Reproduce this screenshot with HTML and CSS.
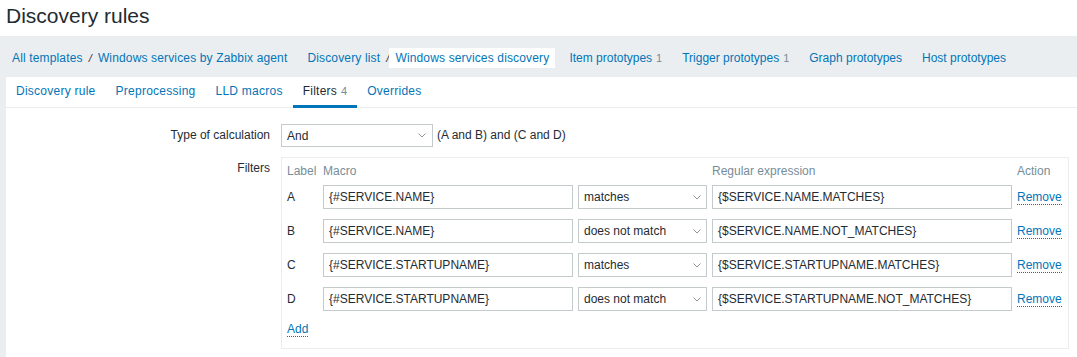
FILE: index.html
```html
<!DOCTYPE html>
<html>
<head>
<meta charset="utf-8">
<title>Discovery rules</title>
<link rel="stylesheet" href="styles.css">
</head>
<body>
<header class="page-header">
  <h1 class="page-title">Discovery rules</h1>
</header>
<main class="main">
  <nav class="breadcrumbs">
    <div class="crumb-group crumb-path">
      <a class="crumb" href="#">All templates</a><span class="sep">/</span><a class="crumb" href="#">Windows services by Zabbix agent</a>
    </div>
    <div class="crumb-group crumb-path">
      <a class="crumb" href="#">Discovery list</a><span class="sep">/</span><span class="crumb crumb-current">Windows services discovery</span>
    </div>
    <div class="crumb-group"><a class="crumb" href="#">Item prototypes<span class="count">1</span></a></div>
    <div class="crumb-group"><a class="crumb" href="#">Trigger prototypes<span class="count">1</span></a></div>
    <div class="crumb-group"><a class="crumb" href="#">Graph prototypes</a></div>
    <div class="crumb-group"><a class="crumb" href="#">Host prototypes</a></div>
  </nav>
  <section class="panel">
    <ul class="tabs">
      <li class="tab"><a href="#">Discovery rule</a></li>
      <li class="tab"><a href="#">Preprocessing</a></li>
      <li class="tab"><a href="#">LLD macros</a></li>
      <li class="tab tab-active"><a href="#">Filters<span class="count">4</span></a></li>
      <li class="tab"><a href="#">Overrides</a></li>
    </ul>
    <div class="form">
      <div class="form-row">
        <label class="form-label">Type of calculation</label>
        <div class="form-field inline">
          <div class="select calc-select"><span>And</span><svg class="chev" width="8" height="5" viewBox="0 0 8 5"><path d="M0.5 0.5 L4 4 L7.5 0.5" fill="none" stroke="#8a949a" stroke-width="1"/></svg></div>
          <span class="formula">(A and B) and (C and D)</span>
        </div>
      </div>
      <div class="form-row">
        <label class="form-label">Filters</label>
        <div class="form-field">
          <div class="filters">
            <div class="f-row f-head">
              <span>Label</span><span>Macro</span><span></span><span>Regular expression</span><span>Action</span>
            </div>
            <div class="f-row">
              <span class="f-label">A</span>
              <div class="input">{#SERVICE.NAME}</div>
              <div class="select"><span>matches</span><svg class="chev" width="8" height="5" viewBox="0 0 8 5"><path d="M0.5 0.5 L4 4 L7.5 0.5" fill="none" stroke="#8a949a" stroke-width="1"/></svg></div>
              <div class="input">{$SERVICE.NAME.MATCHES}</div>
              <a class="link" href="#">Remove</a>
            </div>
            <div class="f-row">
              <span class="f-label">B</span>
              <div class="input">{#SERVICE.NAME}</div>
              <div class="select"><span>does not match</span><svg class="chev" width="8" height="5" viewBox="0 0 8 5"><path d="M0.5 0.5 L4 4 L7.5 0.5" fill="none" stroke="#8a949a" stroke-width="1"/></svg></div>
              <div class="input">{$SERVICE.NAME.NOT_MATCHES}</div>
              <a class="link" href="#">Remove</a>
            </div>
            <div class="f-row">
              <span class="f-label">C</span>
              <div class="input">{#SERVICE.STARTUPNAME}</div>
              <div class="select"><span>matches</span><svg class="chev" width="8" height="5" viewBox="0 0 8 5"><path d="M0.5 0.5 L4 4 L7.5 0.5" fill="none" stroke="#8a949a" stroke-width="1"/></svg></div>
              <div class="input">{$SERVICE.STARTUPNAME.MATCHES}</div>
              <a class="link" href="#">Remove</a>
            </div>
            <div class="f-row">
              <span class="f-label">D</span>
              <div class="input">{#SERVICE.STARTUPNAME}</div>
              <div class="select"><span>does not match</span><svg class="chev" width="8" height="5" viewBox="0 0 8 5"><path d="M0.5 0.5 L4 4 L7.5 0.5" fill="none" stroke="#8a949a" stroke-width="1"/></svg></div>
              <div class="input">{$SERVICE.STARTUPNAME.NOT_MATCHES}</div>
              <a class="link" href="#">Remove</a>
            </div>
            <div class="f-add"><a class="link" href="#">Add</a></div>
          </div>
        </div>
      </div>
    </div>
  </section>
</main>
</body>
</html>
```

FILE: styles.css
```css
* { box-sizing: border-box; }

html, body {
  margin: 0;
  padding: 0;
}

body {
  font-family: "Liberation Sans", Arial, sans-serif;
  font-size: 12px;
  color: #1f2c33;
  background: #ebeef0;
}

a { color: #0275b8; text-decoration: none; }

.page-header {
  background: #ffffff;
  height: 36px;
  padding: 2px 6px 0;
}

.page-title {
  margin: 0;
  font-size: 21px;
  font-weight: normal;
  line-height: 28px;
  color: #1f2c33;
}

.main {
  padding: 0 0 0 6px;
}

.breadcrumbs {
  height: 41px;
  display: flex;
  align-items: center;
  gap: 8px;
  padding-top: 3px;
}

.crumb-group {
  display: flex;
  align-items: center;
}

.crumb-path {
  letter-spacing: 0.15px;
}

.crumb {
  display: block;
  padding: 0 6px;
  line-height: 20px;
}

.crumb-current {
  background: #ffffff;
  color: #0275b8;
}

.sep {
  color: #1f2c33;
  font-size: 11px;
  font-style: italic;
}

.count {
  color: #768d99;
  font-size: 11px;
  margin-left: 4px;
  letter-spacing: 0;
}

.panel {
  background: #ffffff;
  min-height: 280px;
}

.tabs {
  list-style: none;
  margin: 0;
  padding: 0;
  display: flex;
  height: 31px;
  border-bottom: 1px solid #ebeef0;
}

.tab a {
  display: block;
  padding: 0 10px;
  line-height: 29px;
  height: 31px;
  border-bottom: 3px solid transparent;
  letter-spacing: 0.25px;
}

.tab-active a {
  color: #1f2c33;
  border-bottom-color: #0275b8;
}

.form {
  padding-top: 16px;
  display: flex;
  flex-direction: column;
  gap: 10px;
}

.form-row {
  display: grid;
  grid-template-columns: 264px 1fr;
  column-gap: 11px;
  align-items: start;
}

.form-label {
  text-align: right;
  line-height: 23px;
}

.form-field.inline {
  display: flex;
  align-items: center;
  gap: 4px;
}

.select {
  height: 24px;
  border: 1px solid #c5cacd;
  display: flex;
  align-items: center;
  padding: 0 5px 0 5px;
  background: #ffffff;
}

.select .chev {
  margin-left: auto;
}

.calc-select {
  width: 152px;
  height: 23px;
  padding-right: 6px;
}

.formula {
  line-height: 23px;
}

.filters {
  width: 788px;
  border: 1px solid #ebeef0;
  padding: 5px 5px 11px 5px;
  display: flex;
  flex-direction: column;
  gap: 10px;
}

.f-row {
  display: grid;
  grid-template-columns: 31px 250px 129px 300px auto;
  column-gap: 5px;
  align-items: center;
  height: 24px;
}

.f-row.f-head {
  height: 16px;
  line-height: 16px;
  color: #768d99;
  margin-bottom: -4px;
}

.input {
  height: 24px;
  border: 1px solid #c5cacd;
  padding: 0 5px;
  line-height: 22px;
  white-space: nowrap;
  overflow: hidden;
}

.link {
  border-bottom: 1px dotted #0275b8;
  line-height: 14px;
  justify-self: start;
}

.f-add {
  line-height: 16px;
  margin-top: 0;
}
```
